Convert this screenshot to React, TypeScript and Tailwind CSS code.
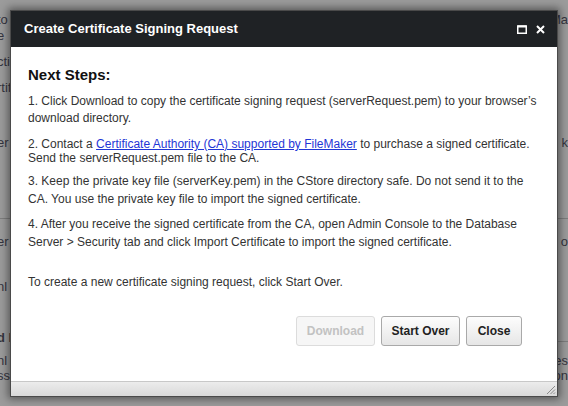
import React from "react";

const font = { fontFamily: '"Liberation Sans", Arial, sans-serif' };

function BgRow({
  h,
  left,
  right,
  hr,
  leftBold,
  rightHr,
}: {
  h: number;
  left?: string;
  right?: string;
  hr?: boolean;
  leftBold?: boolean;
  rightHr?: boolean;
}) {
  return (
    <div
      className={`flex items-center justify-between ${hr ? "border-b border-[#7d7d7d]" : ""}`}
      style={{ height: h }}
    >
      <span className={`ml-[-3px] whitespace-nowrap ${leftBold ? "font-bold" : ""}`}>{left ?? ""}</span>
      {rightHr ? (
        <span className="block h-[8px] w-[12px] border-b border-[#7d7d7d]" />
      ) : (
        <span className="whitespace-nowrap">{right ?? ""}</span>
      )}
    </div>
  );
}

function Btn({ children, w, disabled }: { children: React.ReactNode; w: number; disabled?: boolean }) {
  return (
    <button
      className={
        disabled
          ? "h-[30px] rounded-[3px] border border-[#dcdcdc] bg-[#f6f6f6] text-[12px] font-bold text-[#c2c2c2]"
          : "h-[30px] rounded-[3px] border border-[#a9a9a9] bg-gradient-to-b from-[#fdfdfd] to-[#e6e6e6] text-[12px] font-bold text-[#222]"
      }
      style={{ width: w, ...font }}
    >
      {children}
    </button>
  );
}

export default function App() {
  return (
    <div className="relative h-[406px] w-[568px] overflow-hidden bg-[#9b9b9b] text-[13px] text-[#35353f]" style={font}>
      {/* dimmed background page */}
      <div className="flex flex-col">
        <BgRow h={12} />
        <BgRow h={16} left="to e" right="Ma" />
        <BgRow h={16} left="e" />
        <BgRow h={10} />
        <BgRow h={16} left="cti" />
        <BgRow h={10} />
        <BgRow h={16} left="rtifi" />
        <BgRow h={39} />
        <BgRow h={16} left="er" right="k" />
        <BgRow h={68} hr />
        <BgRow h={15} />
        <BgRow h={16} left="er" right="o" />
        <BgRow h={29} />
        <BgRow h={16} left="nl" />
        <BgRow h={35} />
        <BgRow h={16} left="d D" leftBold rightHr />
        <BgRow h={7} />
        <BgRow h={16} left="nl" right="es" />
        <BgRow h={14} left="ss" right="on" />
        <BgRow h={20} left="" />
      </div>

      {/* modal dialog */}
      <div className="absolute left-[10px] top-[10px] flex h-[387px] w-[548px] flex-col border border-[#4a4a4a] bg-white shadow-[0_0_8px_2px_rgba(0,0,0,0.45)]">
        <div className="flex h-[36px] shrink-0 items-center justify-between bg-[#1f2225] pl-[13px] pr-[12px]">
          <span className="text-[13px] font-bold text-white">Create Certificate Signing Request</span>
          <div className="flex items-center gap-[9px]">
            <svg width="10" height="9" viewBox="0 0 10 9">
              <rect x="0.75" y="1" width="8.5" height="7.25" fill="none" stroke="white" strokeWidth="1.5" />
              <rect x="0.75" y="0.5" width="8.5" height="2" fill="white" />
            </svg>
            <svg width="9" height="9" viewBox="0 0 9 9">
              <path d="M1 1 L8 8 M8 1 L1 8" stroke="white" strokeWidth="2" />
            </svg>
          </div>
        </div>

        <div className="flex flex-1 flex-col px-[17px] text-[12px] text-[#333]">
          <div className="mt-[19px] text-[15px] font-bold leading-[18px] text-[#111]">Next Steps:</div>
          <p className="mt-[9px] leading-[17px]">
            1. Click Download to copy the certificate signing request (serverRequest.pem) to your browser’s download directory.
          </p>
          <p className="mt-[10px] leading-[14px]">
            2. Contact a{" "}
            <a className="text-[#1f36d6] underline">Certificate Authority (CA) supported by FileMaker</a> to purchase a
            signed certificate. Send the serverRequest.pem file to the CA.
          </p>
          <p className="mt-[7px] leading-[18px]">
            3. Keep the private key file (serverKey.pem) in the CStore directory safe. Do not send it to the CA. You use the
            private key file to import the signed certificate.
          </p>
          <p className="mt-[7px] leading-[18px]">
            4. After you receive the signed certificate from the CA, open Admin Console to the Database Server &gt; Security
            tab and click Import Certificate to import the signed certificate.
          </p>
          <p className="mt-[22px] leading-[18px]">To create a new certificate signing request, click Start Over.</p>
          <div className="mt-[25px] flex justify-end gap-[6px] pr-[18px]">
            <Btn w={79} disabled>
              Download
            </Btn>
            <Btn w={79}>Start Over</Btn>
            <Btn w={56}>Close</Btn>
          </div>
        </div>

        <div className="relative h-[15px] shrink-0 border-t border-[#c8c8c8] bg-gradient-to-b from-[#ececec] to-[#d9d9d9]">
          <svg className="absolute bottom-[1px] right-[1px]" width="11" height="11" viewBox="0 0 11 11">
            <path d="M10 2 L2 10 M10 5.5 L5.5 10 M10 8.5 L8.5 10" stroke="#8a8a8a" strokeWidth="1" />
          </svg>
        </div>
      </div>
    </div>
  );
}
